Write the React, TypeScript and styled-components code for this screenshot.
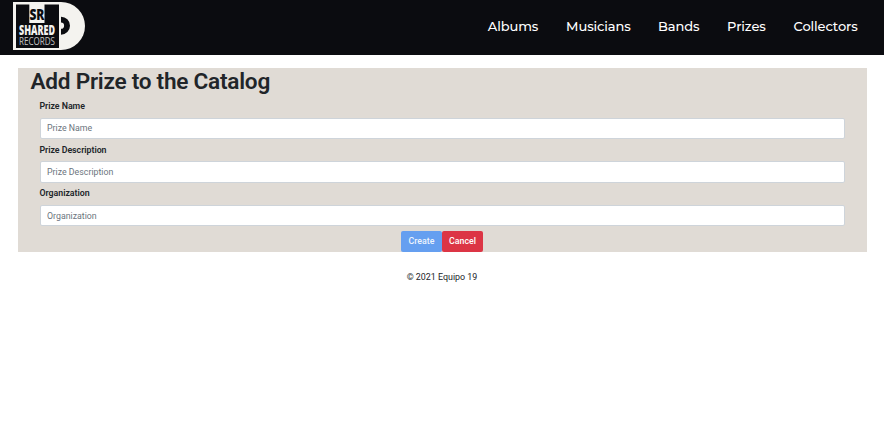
import React from "react";
import styled, { createGlobalStyle } from "styled-components";

const GlobalStyle = createGlobalStyle`
  *, *::before, *::after { box-sizing: border-box; }
  body {
    margin: 0;
    background: #fff;
    color: #212529;
    font-family: Roboto, sans-serif;
    font-size: 8.9px;
    line-height: 13px;
  }
`;

const Header = styled.header`
  display: flex;
  justify-content: space-between;
  align-items: flex-start;
  height: 55px;
  padding: 1px 26.5px 0 12px;
  background: #0b0c10;
`;

const Logo = styled.svg`
  display: block;
  width: 74px;
  height: 50px;
`;

const Nav = styled.nav`
  display: flex;
  gap: 28px;
  padding-top: 16px;
`;

const NavLink = styled.a<{ $width: number }>`
  width: ${(p) => p.$width}px;
  letter-spacing: -0.1px;
  color: #fff;
  font-family: Montserrat, Inter, sans-serif;
  font-size: 13px;
  font-weight: 500;
  line-height: 19px;
  white-space: nowrap;
  text-decoration: none;
`;

const Panel = styled.form`
  height: 184px;
  margin: 13px 17px 0 18px;
  background: #e0dbd5;
`;

const Title = styled.h1`
  margin: 0;
  padding-left: 12.5px;
  height: 31px;
  font-size: 22.6px;
  font-weight: 600;
  letter-spacing: -0.25px;
  line-height: 27px;
`;

const Field = styled.div`
  height: 43.7px;
  padding: 0 22px;
`;

const Label = styled.label`
  display: block;
  height: 18.5px;
  margin-left: -0.5px;
  font-size: 8.8px;
  font-weight: 600;
  letter-spacing: -0.03px;
  line-height: 14px;
`;

const Input = styled.input`
  display: block;
  width: 100%;
  height: 21.5px;
  padding: 0 6px;
  border: 1px solid #ced4da;
  border-radius: 2px;
  background: #fff;
  color: #495057;
  font: 400 8.8px/13px Roboto, sans-serif;
  &::placeholder { color: #6c757d; opacity: 1; }
`;

const Actions = styled.div`
  display: flex;
  justify-content: center;
  padding: 1px 1px 0 0;
`;

const Button = styled.button<{ $color: string; $text?: string }>`
  width: 41px;
  height: 21px;
  padding: 0;
  border: 0;
  border-radius: 2px;
  background: ${(p) => p.$color};
  color: ${(p) => p.$text ?? "#fff"};
  font: 500 8.8px/13px Roboto, sans-serif;
`;

const Footer = styled.footer`
  padding-top: 19px;
  text-align: center;
`;

const links = [
  { label: "Albums", width: 50.3 },
  { label: "Musicians", width: 64 },
  { label: "Bands", width: 41 },
  { label: "Prizes", width: 38.4 },
  { label: "Collectors", width: 64 },
];

const fields = ["Prize Name", "Prize Description", "Organization"];

export default function App() {
  return (
    <>
      <GlobalStyle />
      <Header>
        <Logo viewBox="12 1 74 50" aria-label="Shared Records">
          <path d="M13 2H61A24 24 0 0 1 61 50H13Z" fill="#f4f3ef" />
          <path d="M16 4.5H29.3V23H44.5V4.5H59V48H16Z" fill="#0b0c10" />
          <path d="M61 16.7A9 9 0 0 1 61 34.7V28.8A3 3 0 0 0 61 22.6Z" fill="#0b0c10" />
          <g fontFamily="Open Sans, sans-serif" textAnchor="middle">
            <text x="36.9" y="19.6" fontSize="16" fontWeight="800" fill="#0b0c10" textLength="15" lengthAdjust="spacingAndGlyphs">SR</text>
            <text x="37" y="35.3" fontSize="13.5" fontWeight="800" fill="#f4f3ef" textLength="36" lengthAdjust="spacingAndGlyphs">SHARED</text>
            <text x="37" y="44.5" fontSize="11" fontWeight="400" fill="#c4c4c3" textLength="36" lengthAdjust="spacingAndGlyphs">RECORDS</text>
          </g>
        </Logo>
        <Nav>
          {links.map((l) => (
            <NavLink key={l.label} $width={l.width}>{l.label}</NavLink>
          ))}
        </Nav>
      </Header>
      <Panel>
        <Title>Add Prize to the Catalog</Title>
        {fields.map((f) => (
          <Field key={f}>
            <Label>{f}</Label>
            <Input placeholder={f} aria-label={f} />
          </Field>
        ))}
        <Actions>
          <Button type="button" $color="#659ff0" $text="#edf4fd">Create</Button>
          <Button type="button" $color="#dc3545">Cancel</Button>
        </Actions>
      </Panel>
      <Footer>© 2021 Equipo 19</Footer>
    </>
  );
}
